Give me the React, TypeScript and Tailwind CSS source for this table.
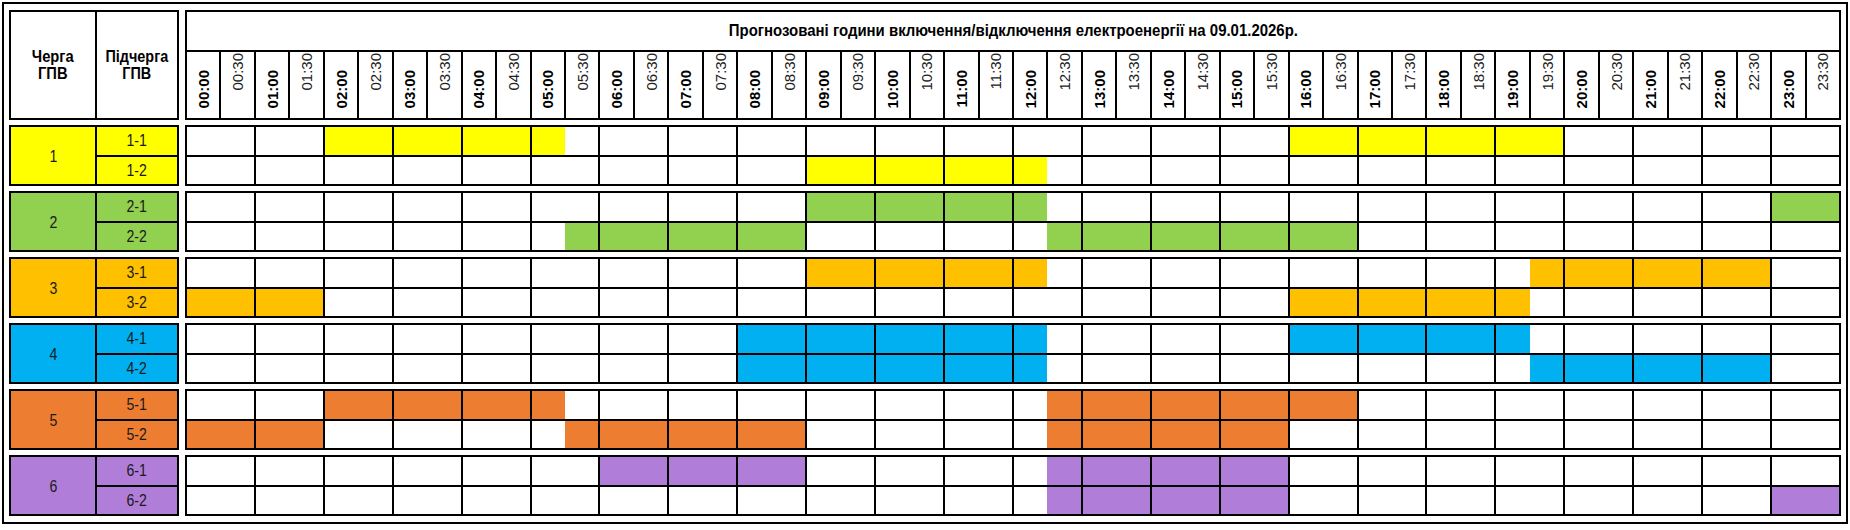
const HOURS = Array.from({ length: 24 }, (_, i) => i);
const SLOTS = Array.from({ length: 48 }, (_, i) => i);

type Row = { label: string; on: [number, number][] };
type Group = { n: number; color: string; rows: Row[] };

// ranges are half-hour slot indexes, [start, end)
const groups: Group[] = [
  {
    n: 1,
    color: 'bg-[#ffff00]',
    rows: [
      { label: '1-1', on: [[4, 11], [32, 40]] },
      { label: '1-2', on: [[18, 25]] },
    ],
  },
  {
    n: 2,
    color: 'bg-[#92d050]',
    rows: [
      { label: '2-1', on: [[18, 25], [46, 48]] },
      { label: '2-2', on: [[11, 18], [25, 34]] },
    ],
  },
  {
    n: 3,
    color: 'bg-[#ffc000]',
    rows: [
      { label: '3-1', on: [[18, 25], [39, 46]] },
      { label: '3-2', on: [[0, 4], [32, 39]] },
    ],
  },
  {
    n: 4,
    color: 'bg-[#00b0f0]',
    rows: [
      { label: '4-1', on: [[16, 25], [32, 39]] },
      { label: '4-2', on: [[16, 25], [39, 46]] },
    ],
  },
  {
    n: 5,
    color: 'bg-[#ed7d31]',
    rows: [
      { label: '5-1', on: [[4, 11], [25, 34]] },
      { label: '5-2', on: [[0, 4], [11, 18], [25, 32]] },
    ],
  },
  {
    n: 6,
    color: 'bg-[#b07dd9]',
    rows: [
      { label: '6-1', on: [[12, 18], [25, 32]] },
      { label: '6-2', on: [[25, 32], [46, 48]] },
    ],
  },
];

function slotLabel(i: number) {
  const h = String(Math.floor(i / 2)).padStart(2, '0');
  return `${h}:${i % 2 ? '30' : '00'}`;
}

function isOn(ranges: [number, number][], i: number) {
  return ranges.some(([a, b]) => i >= a && i < b);
}

export default function App() {
  return (
    <div className="h-[530px] w-[1850px] bg-white p-[2px] font-['Liberation_Sans',Arial,sans-serif] text-black">
      <div className="flex flex-col gap-y-[5px] border-2 border-black px-[5px] pt-[6px] pb-[6px]">
        {/* Header */}
        <div className="flex h-[110px] gap-x-[6px]">
          <div className="flex w-[170px] shrink-0 gap-x-[2px] border-2 border-black bg-black">
            <div className="flex w-[84px] items-center justify-center bg-white">
              <span className="scale-x-[0.92] text-center text-[16px] leading-[17px] font-bold">
                Черга
                <br />
                ГПВ
              </span>
            </div>
            <div className="flex flex-1 items-center justify-center bg-white">
              <span className="scale-x-[0.9] text-center text-[16px] leading-[17px] font-bold">
                Підчерга
                <br />
                ГПВ
              </span>
            </div>
          </div>

          <div className="flex min-w-0 flex-1 flex-col gap-y-[2px] border-2 border-black bg-black">
            <div className="flex h-[38px] items-center justify-center bg-white">
              <span className="scale-x-[0.88] text-[17px] font-bold whitespace-nowrap">
                Прогнозовані години включення/відключення електроенергії на 09.01.2026р.
              </span>
            </div>
            <div className="grid flex-1 grid-cols-[repeat(48,minmax(0,1fr))] gap-x-[2px]">
              {SLOTS.map((i) => (
                <div
                  key={i}
                  className={`flex justify-center bg-white ${i % 2 ? 'items-start pt-[1px]' : 'items-end pb-[10px]'}`}
                >
                  <span
                    className={`rotate-180 text-[15px] leading-none [writing-mode:vertical-rl] ${i % 2 ? 'font-normal text-[#222]' : 'font-bold'}`}
                  >
                    {slotLabel(i)}
                  </span>
                </div>
              ))}
            </div>
          </div>
        </div>

        {/* Groups */}
        {groups.map((g) => (
          <div key={g.n} className="flex h-[61px] gap-x-[6px]">
            <div className="flex w-[170px] shrink-0 gap-x-[2px] border-2 border-black bg-black">
              <div className={`flex w-[84px] items-center justify-center pt-[2px] ${g.color}`}>
                <span className="scale-x-[0.88] text-[16px] text-[#1a1a1a]">{g.n}</span>
              </div>
              <div className="flex flex-1 flex-col gap-y-[2px]">
                {g.rows.map((r) => (
                  <div
                    key={r.label}
                    className={`flex flex-1 items-center justify-center pt-[1px] ${g.color}`}
                  >
                    <span className="scale-x-[0.88] text-[16px] text-[#1a1a1a]">{r.label}</span>
                  </div>
                ))}
              </div>
            </div>

            <div className="flex min-w-0 flex-1 flex-col gap-y-[2px] border-2 border-black bg-black">
              {g.rows.map((r) => (
                <div key={r.label} className="grid flex-1 grid-cols-[repeat(24,minmax(0,1fr))] gap-x-[2px]">
                  {HOURS.map((h) => (
                    <div key={h} className="flex bg-white">
                      <div className={`flex-1 ${isOn(r.on, h * 2) ? g.color : ''}`} />
                      <div className={`flex-1 ${isOn(r.on, h * 2 + 1) ? g.color : ''}`} />
                    </div>
                  ))}
                </div>
              ))}
            </div>
          </div>
        ))}
      </div>
    </div>
  );
}
